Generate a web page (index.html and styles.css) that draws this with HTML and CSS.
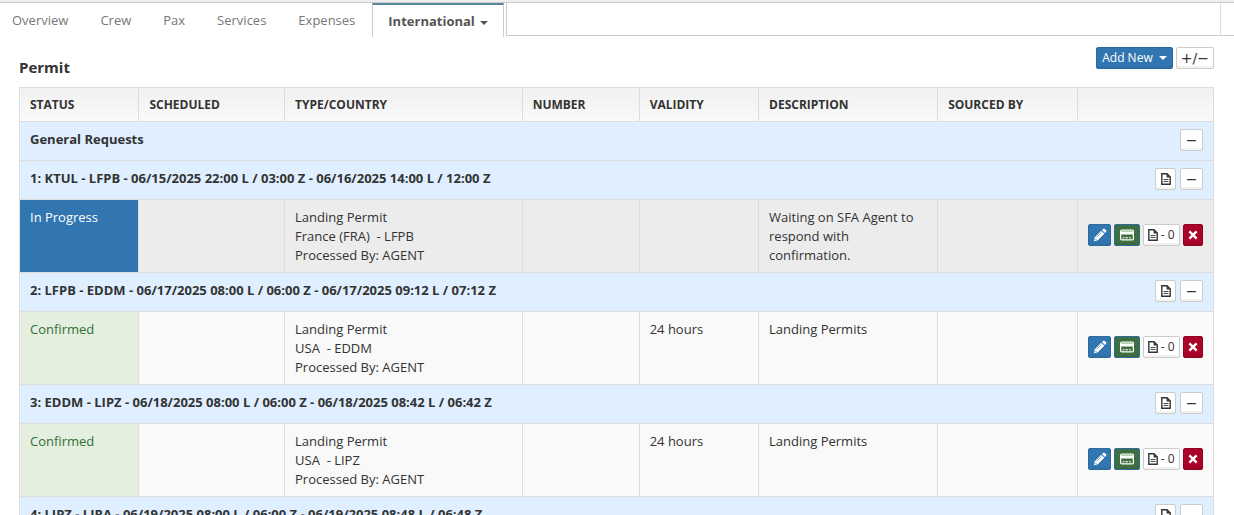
FILE: index.html
```html
<!DOCTYPE html>
<html lang="en">
<head>
  <meta charset="UTF-8">
  <title>International - Permit</title>
  <link rel="stylesheet" href="styles.css">
</head>
<body>
  <!-- shared icons -->
  <svg class="icon-defs" aria-hidden="true">
    <symbol id="icon-doc" viewBox="0 0 10 12">
      <path d="M0.8 0.7H6L9.2 4V11.3H0.8Z" fill="#fff" stroke="#333" stroke-width="1.4"/>
      <path d="M5.6 0.4L9.6 4.4H5.6Z" fill="#333"/>
      <path d="M2.5 6.5H7.5M2.5 8.5H7.5" stroke="#444" stroke-width="1"/>
    </symbol>
    <symbol id="icon-pencil" viewBox="0 0 14 14">
      <path d="M0.8 13.2L1.8 9.2L8.3 2.7L11.3 5.7L4.8 12.2Z" fill="#fff"/>
      <path d="M9 2L10.3 0.8Q11 0.3 11.7 0.9L13.1 2.3Q13.7 3 13.2 3.7L12 5Z" fill="#fff"/>
      <path d="M3.6 9.4L8.6 4.4" stroke="#3276b1" stroke-width="0.6"/>
      <path d="M2 10.6L3.4 12" stroke="#3276b1" stroke-width="0.8"/>
    </symbol>
    <symbol id="icon-card" viewBox="0 0 14 12">
      <rect x="0.6" y="1.1" width="12.8" height="9.8" rx="1.2" fill="none" stroke="#fff" stroke-width="1.2"/>
      <rect x="1" y="1.5" width="12" height="1.5" fill="#b9cdb7"/>
      <rect x="1" y="3" width="12" height="2.5" fill="#fff"/>
      <path d="M2.5 8.8H4.5M5.5 8.8H8M9 8.8H11" stroke="#fff" stroke-width="1"/>
    </symbol>
    <symbol id="icon-remove" viewBox="0 0 10 10">
      <path d="M1.4 1.4L8.6 8.6M8.6 1.4L1.4 8.6" stroke="#fff" stroke-width="2.4"/>
    </symbol>
  </svg>

  <nav class="tabs">
    <ul class="tab-list">
      <li><a href="#overview">Overview</a></li>
      <li><a href="#crew">Crew</a></li>
      <li><a href="#pax">Pax</a></li>
      <li><a href="#services">Services</a></li>
      <li><a href="#expenses">Expenses</a></li>
      <li class="active"><a href="#international">International <span class="caret"></span></a></li>
    </ul>
    <div class="tab-fill"></div>
    <div class="tab-end"></div>
  </nav>

  <main class="content">
    <header class="section-header">
      <h1>Permit</h1>
      <div class="toolbar">
        <button type="button" class="btn btn-primary btn-add">Add New <span class="caret"></span></button>
        <button type="button" class="btn btn-toggle-all">+/−</button>
      </div>
    </header>

    <table class="permits">
      <colgroup>
        <col class="col-status">
        <col class="col-scheduled">
        <col class="col-type">
        <col class="col-number">
        <col class="col-validity">
        <col class="col-description">
        <col class="col-sourced">
        <col class="col-actions">
      </colgroup>
      <thead>
        <tr>
          <th>STATUS</th>
          <th>SCHEDULED</th>
          <th>TYPE/COUNTRY</th>
          <th>NUMBER</th>
          <th>VALIDITY</th>
          <th>DESCRIPTION</th>
          <th>SOURCED BY</th>
          <th></th>
        </tr>
      </thead>
      <tbody>
        <tr class="group">
          <td colspan="8">
            <div class="group-row">
              <span>General Requests</span>
              <div class="group-actions">
                <button type="button" class="btn btn-collapse" aria-label="Collapse">−</button>
              </div>
            </div>
          </td>
        </tr>
        <tr class="group">
          <td colspan="8">
            <div class="group-row">
              <span>1: KTUL - LFPB - 06/15/2025 22:00 L / 03:00 Z - 06/16/2025 14:00 L / 12:00 Z</span>
              <div class="group-actions">
                <button type="button" class="btn btn-doc" aria-label="Notes"><svg class="icon-doc"><use href="#icon-doc"/></svg></button>
                <button type="button" class="btn btn-collapse" aria-label="Collapse">−</button>
              </div>
            </div>
          </td>
        </tr>
        <tr class="permit in-progress">
          <td class="status">In Progress</td>
          <td></td>
          <td>Landing Permit<br>France (FRA) &nbsp;- LFPB<br>Processed By: AGENT</td>
          <td></td>
          <td></td>
          <td>Waiting on SFA Agent to respond with confirmation.</td>
          <td></td>
          <td class="actions">
            <div class="action-list">
              <button type="button" class="btn btn-primary btn-edit" aria-label="Edit"><svg class="icon-pencil"><use href="#icon-pencil"/></svg></button>
              <button type="button" class="btn btn-card" aria-label="Billing"><svg class="icon-card"><use href="#icon-card"/></svg></button>
              <button type="button" class="btn btn-files"><svg class="icon-doc"><use href="#icon-doc"/></svg> - 0</button>
              <button type="button" class="btn btn-danger" aria-label="Remove"><svg class="icon-remove"><use href="#icon-remove"/></svg></button>
            </div>
          </td>
        </tr>
        <tr class="group">
          <td colspan="8">
            <div class="group-row">
              <span>2: LFPB - EDDM - 06/17/2025 08:00 L / 06:00 Z - 06/17/2025 09:12 L / 07:12 Z</span>
              <div class="group-actions">
                <button type="button" class="btn btn-doc" aria-label="Notes"><svg class="icon-doc"><use href="#icon-doc"/></svg></button>
                <button type="button" class="btn btn-collapse" aria-label="Collapse">−</button>
              </div>
            </div>
          </td>
        </tr>
        <tr class="permit confirmed">
          <td class="status">Confirmed</td>
          <td></td>
          <td>Landing Permit<br>USA &nbsp;- EDDM<br>Processed By: AGENT</td>
          <td></td>
          <td>24 hours</td>
          <td>Landing Permits</td>
          <td></td>
          <td class="actions">
            <div class="action-list">
              <button type="button" class="btn btn-primary btn-edit" aria-label="Edit"><svg class="icon-pencil"><use href="#icon-pencil"/></svg></button>
              <button type="button" class="btn btn-card" aria-label="Billing"><svg class="icon-card"><use href="#icon-card"/></svg></button>
              <button type="button" class="btn btn-files"><svg class="icon-doc"><use href="#icon-doc"/></svg> - 0</button>
              <button type="button" class="btn btn-danger" aria-label="Remove"><svg class="icon-remove"><use href="#icon-remove"/></svg></button>
            </div>
          </td>
        </tr>
        <tr class="group">
          <td colspan="8">
            <div class="group-row">
              <span>3: EDDM - LIPZ - 06/18/2025 08:00 L / 06:00 Z - 06/18/2025 08:42 L / 06:42 Z</span>
              <div class="group-actions">
                <button type="button" class="btn btn-doc" aria-label="Notes"><svg class="icon-doc"><use href="#icon-doc"/></svg></button>
                <button type="button" class="btn btn-collapse" aria-label="Collapse">−</button>
              </div>
            </div>
          </td>
        </tr>
        <tr class="permit confirmed">
          <td class="status">Confirmed</td>
          <td></td>
          <td>Landing Permit<br>USA &nbsp;- LIPZ<br>Processed By: AGENT</td>
          <td></td>
          <td>24 hours</td>
          <td>Landing Permits</td>
          <td></td>
          <td class="actions">
            <div class="action-list">
              <button type="button" class="btn btn-primary btn-edit" aria-label="Edit"><svg class="icon-pencil"><use href="#icon-pencil"/></svg></button>
              <button type="button" class="btn btn-card" aria-label="Billing"><svg class="icon-card"><use href="#icon-card"/></svg></button>
              <button type="button" class="btn btn-files"><svg class="icon-doc"><use href="#icon-doc"/></svg> - 0</button>
              <button type="button" class="btn btn-danger" aria-label="Remove"><svg class="icon-remove"><use href="#icon-remove"/></svg></button>
            </div>
          </td>
        </tr>
        <tr class="group">
          <td colspan="8">
            <div class="group-row">
              <span>4: LIPZ - LIRA - 06/19/2025 08:00 L / 06:00 Z - 06/19/2025 08:48 L / 06:48 Z</span>
              <div class="group-actions">
                <button type="button" class="btn btn-doc" aria-label="Notes"><svg class="icon-doc"><use href="#icon-doc"/></svg></button>
                <button type="button" class="btn btn-collapse" aria-label="Collapse">−</button>
              </div>
            </div>
          </td>
        </tr>
      </tbody>
    </table>
  </main>
</body>
</html>
```

FILE: styles.css
```css
* {
  box-sizing: border-box;
}

html {
  height: 100%;
  overflow: hidden;
}

body {
  margin: 0;
  font-family: "Open Sans", Arial, sans-serif;
  font-size: 13px;
  line-height: 19px;
  color: #333;
  background-color: #fff;
  border-top: 2px solid #eee;
}

.icon-defs {
  display: none;
}

/* tabs */
.tabs {
  display: flex;
  height: 34px;
  border-top: 1px solid #ccc;
}

.tab-list {
  display: flex;
  margin: 0;
  padding: 0;
  list-style: none;
}

.tab-list a {
  display: block;
  padding: 8px 20px 8px 12px;
  color: #777;
  text-decoration: none;
}

.tab-list li.active {
  margin-left: -3px;
}

.tab-list li.active a {
  padding: 7px 15px 6px;
  border: 1px solid #ccc;
  border-top: 2px solid #57889c;
  border-bottom: none;
  color: #555;
  font-weight: bold;
}

.tab-fill {
  flex: 1;
  margin-left: 2px;
  border-left: 1px solid #ccc;
  border-bottom: 1px solid #ccc;
}

.tab-end {
  width: 14px;
  border-left: 1px solid #ddd;
  border-bottom: 1px solid #ccc;
}

.caret {
  display: inline-block;
  margin-left: 2px;
  vertical-align: middle;
  border-top: 4px solid;
  border-left: 4px solid transparent;
  border-right: 4px solid transparent;
}

/* section header */
.content {
  padding: 11px 20px 0 19px;
}

.section-header {
  display: flex;
  justify-content: space-between;
  height: 40px;
}

.section-header h1 {
  margin: 0;
  padding-top: 10px;
  font-size: 15px;
  line-height: 20px;
}

.toolbar {
  display: flex;
  gap: 3px;
}

/* buttons */
.btn {
  display: flex;
  align-items: center;
  justify-content: center;
  height: 22px;
  padding: 0;
  border: 1px solid #ccc;
  border-radius: 2px;
  background-color: #fff;
  box-shadow: inset 0 -2px 0 rgba(0, 0, 0, 0.05);
  color: #333;
  font-family: inherit;
  font-size: 12px;
  line-height: 18px;
  white-space: pre;
  cursor: pointer;
}

.btn svg {
  flex: none;
}

.btn-primary {
  background-color: #3276b1;
  border-color: #2c699d;
  color: #fff;
}

.btn-add {
  padding: 0 5px;
}

.btn-add .caret {
  margin-left: 3px;
}

.btn-card {
  width: 26px;
  background-color: #3f6f3f;
  border-color: #2c699d;
}

.btn-danger {
  width: 21px;
  background-color: #a90329;
  border-color: #900323;
}

.btn-edit {
  width: 24px;
}

.btn-doc {
  width: 21px;
}

.btn-collapse,
.btn-toggle-all {
  font-family: "DejaVu Sans", sans-serif;
  font-size: 14px;
}

.btn-collapse {
  width: 23px;
}

.btn-files {
  width: 38px;
}

.btn-toggle-all {
  padding: 0 4px;
}

.icon-doc {
  width: 10px;
  height: 12px;
}

.icon-pencil {
  width: 14px;
  height: 14px;
}

.icon-card {
  width: 14px;
  height: 12px;
}

.icon-remove {
  width: 10px;
  height: 10px;
}

/* permit table */
.permits {
  width: 100%;
  table-layout: fixed;
  border-collapse: collapse;
}

.col-status { width: 10%; }
.col-scheduled { width: 12.2%; }
.col-type { width: 19.9%; }
.col-number { width: 9.8%; }
.col-validity { width: 10%; }
.col-description { width: 15%; }
.col-sourced { width: 11.7%; }
.col-actions { width: 11.4%; }

.permits th,
.permits td {
  padding: 8px 10px 7px;
  border: 1px solid #ddd;
  text-align: left;
  vertical-align: top;
}

.permits th {
  padding: 7px 10px;
  background-image: linear-gradient(to bottom, #f0f0f0, #fafafa);
  font-size: 12px;
}

.permits .group td {
  padding: 7px 10px 9px;
  background-color: #dfefff;
  font-weight: bold;
}

.group-row {
  display: flex;
  justify-content: space-between;
  line-height: 21px;
}

.group-actions {
  display: flex;
  gap: 4px;
}

.permit td {
  background-color: #f9f9f9;
}

.in-progress td {
  background-color: #ececec;
}

.in-progress .status {
  background-color: #3276b1;
  color: #fff;
}

.confirmed .status {
  background-color: #e4efdf;
  color: #356e35;
}

.permits .actions {
  padding: 7px 10px 9px;
  vertical-align: middle;
}

.action-list {
  display: flex;
  justify-content: flex-end;
  gap: 3px;
}
```
